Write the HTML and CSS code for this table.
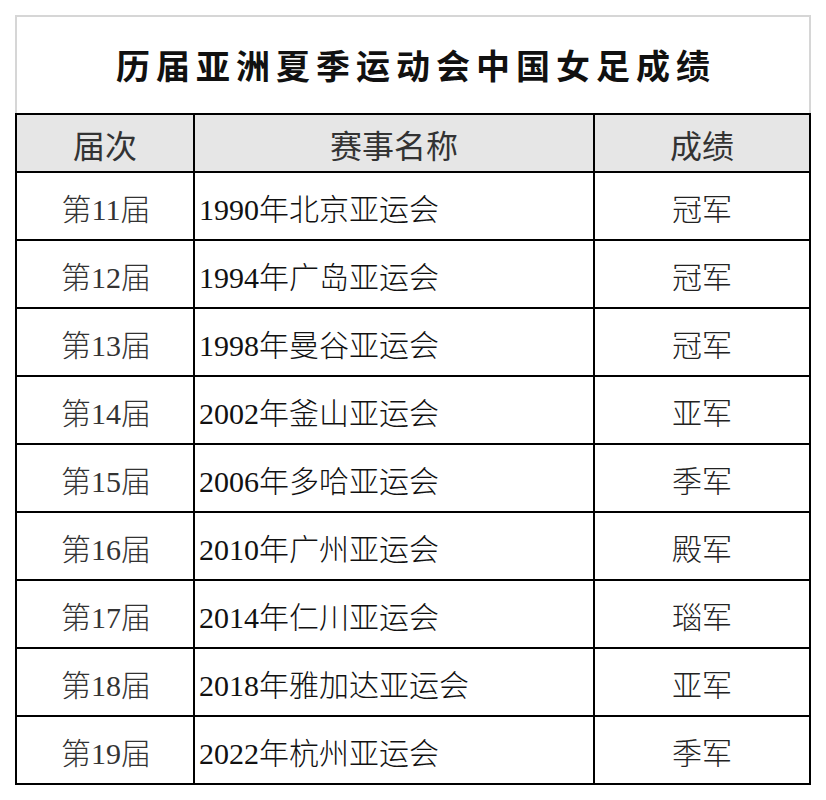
FILE: index.html
```html
<!DOCTYPE html>
<html lang="zh-CN">
<head>
<meta charset="utf-8">
<title>历届亚洲夏季运动会中国女足成绩</title>
<link rel="stylesheet" href="styles.css">
</head>
<body>
<div class="sheet">
  <div class="title">历届亚洲夏季运动会中国女足成绩</div>
  <div class="grid">
    <div class="cell head">届次</div>
    <div class="cell head">赛事名称</div>
    <div class="cell head">成绩</div>

    <div class="cell c1">第11届</div><div class="cell c2">1990年北京亚运会</div><div class="cell c3">冠军</div>
    <div class="cell c1">第12届</div><div class="cell c2">1994年广岛亚运会</div><div class="cell c3">冠军</div>
    <div class="cell c1">第13届</div><div class="cell c2">1998年曼谷亚运会</div><div class="cell c3">冠军</div>
    <div class="cell c1">第14届</div><div class="cell c2">2002年釜山亚运会</div><div class="cell c3">亚军</div>
    <div class="cell c1">第15届</div><div class="cell c2">2006年多哈亚运会</div><div class="cell c3">季军</div>
    <div class="cell c1">第16届</div><div class="cell c2">2010年广州亚运会</div><div class="cell c3">殿军</div>
    <div class="cell c1">第17届</div><div class="cell c2">2014年仁川亚运会</div><div class="cell c3">瑙军</div>
    <div class="cell c1">第18届</div><div class="cell c2">2018年雅加达亚运会</div><div class="cell c3">亚军</div>
    <div class="cell c1">第19届</div><div class="cell c2">2022年杭州亚运会</div><div class="cell c3">季军</div>
  </div>
</div>
</body>
</html>
```
FILE: styles.css
```css
html, body {
  margin: 0;
  padding: 0;
  background: #ffffff;
}

.sheet {
  margin: 15px 0 0 15px;
  width: 796px;
}

.title {
  box-sizing: border-box;
  height: 98px;
  border: 2px solid #d6d6d6;
  border-bottom: none;
  display: flex;
  align-items: center;
  justify-content: center;
  padding-bottom: 2px;
  padding-left: 6px;
  font-family: "Noto Sans CJK SC", "Noto Sans", sans-serif;
  font-weight: 700;
  font-size: 34px;
  letter-spacing: 6px;
  color: #111111;
}

.grid {
  display: grid;
  grid-template-columns: 176px 398px 214px;
  grid-template-rows: 56px repeat(9, 66px);
  gap: 2px;
  padding: 2px;
  background: #000000;
}

.cell {
  background: #ffffff;
  display: flex;
  align-items: center;
}

.head {
  background: #e6e6e6;
  justify-content: center;
  font-family: "Noto Sans CJK SC", "Noto Sans", sans-serif;
  font-size: 32px;
  color: #333333;
  padding-top: 2px;
}

.c1, .c2, .c3 {
  font-family: "Liberation Serif", "Noto Sans CJK SC", serif;
  font-weight: 300;
  font-size: 30px;
  padding-top: 2px;
}

.c1 {
  justify-content: center;
  color: #333333;
  padding-left: 2px;
}

.c2 {
  justify-content: flex-start;
  padding-left: 4px;
  color: #111111;
}

.c3 {
  justify-content: center;
  color: #222222;
}
```
